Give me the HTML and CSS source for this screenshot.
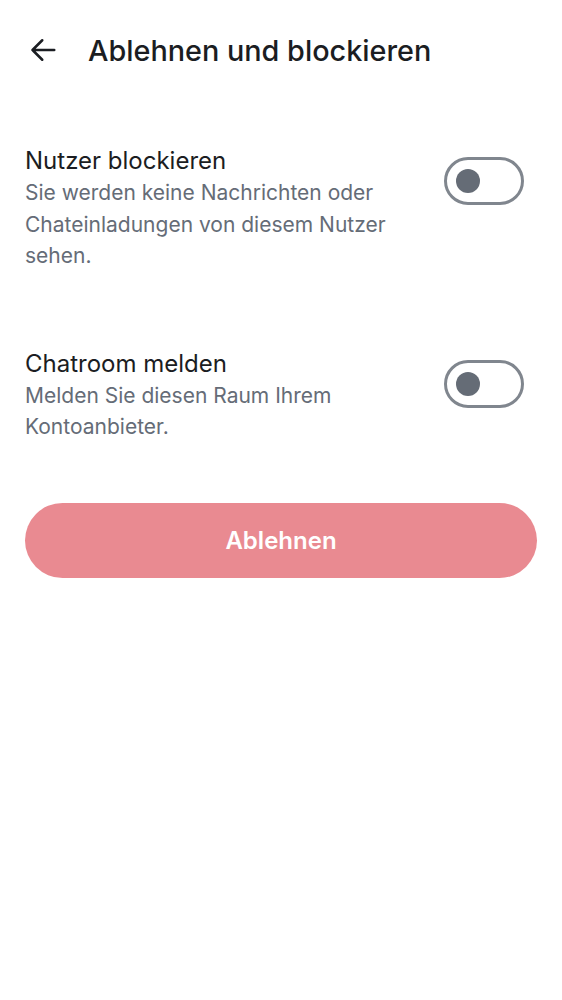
FILE: index.html
```html
<!DOCTYPE html>
<html lang="de">
<head>
<meta charset="utf-8">
<link rel="stylesheet" href="styles.css">
</head>
<body>
<div class="screen">
  <header class="topbar">
    <button class="back" aria-label="Zurück">
      <svg width="36" height="36" viewBox="0 0 24 24"><path d="M19.5 12H5 M11.5 5.5L5 12l6.5 6.5" fill="none" stroke="#1b1d22" stroke-width="1.7" stroke-linecap="round" stroke-linejoin="round"/></svg>
    </button>
    <h1 class="title">Ablehnen und blockieren</h1>
  </header>

  <section class="row row-first">
    <div class="row-text">
      <div class="row-title">Nutzer blockieren</div>
      <div class="row-sub">Sie werden keine Nachrichten oder Chateinladungen von diesem Nutzer sehen.</div>
    </div>
    <div class="switch"><span class="thumb"></span></div>
  </section>

  <section class="row row-second">
    <div class="row-text">
      <div class="row-title">Chatroom melden</div>
      <div class="row-sub">Melden Sie diesen Raum Ihrem Kontoanbieter.</div>
    </div>
    <div class="switch"><span class="thumb"></span></div>
  </section>

  <div class="actions">
    <button class="primary">Ablehnen</button>
  </div>
</div>
</body>
</html>
```

FILE: styles.css
```css
html, body {
  margin: 0;
  padding: 0;
  background: #ffffff;
}
body {
  font-family: Inter, Roboto, sans-serif;
  color: #1b1d22;
}
.screen {
  width: 562px;
  min-height: 1000px;
  background: #ffffff;
}
.topbar {
  height: 100px;
  display: flex;
  align-items: center;
  padding-left: 25px;
  box-sizing: border-box;
}
.back {
  width: 36px;
  height: 36px;
  padding: 0;
  border: 0;
  background: none;
  display: flex;
  align-items: center;
  justify-content: center;
}
.back svg {
  width: 36px;
  height: 36px;
  flex: none;
}
.title {
  margin: 0 0 0 27px;
  font-size: 28.8px;
  font-weight: 500;
  color: #1b1d22;
  letter-spacing: 0;
}
.row {
  display: flex;
  align-items: flex-start;
  padding: 0 38px 0 25px;
  gap: 24px;
}
.row-first {
  margin-top: 44px;
}
.row-second {
  margin-top: 75px;
}
.row-text {
  flex: 1;
  min-width: 0;
}
.row-title {
  font-size: 24px;
  line-height: 33px;
  color: #1b1d22;
}
.row-sub {
  font-size: 21px;
  line-height: 31.5px;
  color: #656c77;
}
.switch {
  flex: none;
  width: 80px;
  height: 48px;
  margin-top: 13px;
  box-sizing: border-box;
  border: 3px solid #80868e;
  border-radius: 24px;
  display: flex;
  align-items: center;
  padding-left: 9px;
}
.thumb {
  width: 24px;
  height: 24px;
  border-radius: 50%;
  background: #656c76;
}
.actions {
  padding: 60px 25px 0 25px;
}
.primary {
  display: block;
  width: 100%;
  height: 75px;
  border: 0;
  border-radius: 38px;
  background: #e98a91;
  color: #ffffff;
  font-family: Inter, Roboto, sans-serif;
  font-size: 24px;
  font-weight: 600;
}
```
